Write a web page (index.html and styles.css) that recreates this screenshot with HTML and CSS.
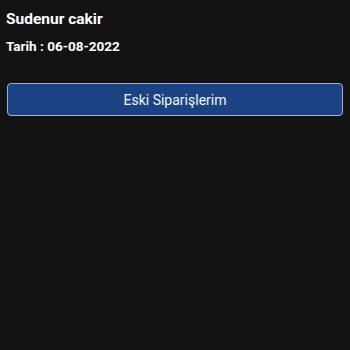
FILE: index.html
```html
<!DOCTYPE html>
<html lang="tr">
<head>
  <meta charset="UTF-8">
  <meta name="viewport" content="width=device-width, initial-scale=1.0">
  <title>Profil</title>
  <link rel="stylesheet" href="styles.css">
</head>
<body>
  <div class="profile">
    <h2 class="user-name">Sudenur cakir</h2>
    <p class="order-date">Tarih : 06-08-2022</p>
    <button class="orders-btn">Eski Siparişlerim</button>
  </div>
</body>
</html>
```

FILE: styles.css
```css
body {
  margin: 0;
  padding: 0;
  background-color: #131313;
  color: #ffffff;
  font-family: Roboto, 'Noto Sans', sans-serif;
}

.profile {
  padding: 10px 7px;
}

.user-name {
  margin: 0 0 0 -1px;
  font-size: 15.5px;
  font-weight: 700;
  line-height: 19px;
}

.order-date {
  margin: 9px 0 0 -1px;
  font-size: 13.5px;
  font-weight: 700;
  line-height: 16px;
}

.orders-btn {
  display: block;
  width: 100%;
  height: 33px;
  margin-top: 29px;
  background-color: #1b4383;
  color: #f2f4f8;
  border: 1px solid #9fb0cc;
  border-radius: 4px;
  font-family: Roboto, sans-serif;
  font-size: 14px;
  cursor: pointer;
}
```
